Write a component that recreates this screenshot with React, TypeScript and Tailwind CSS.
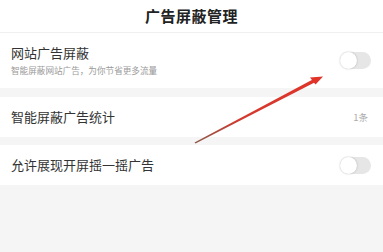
export default function App() {
  const font = { fontFamily: '"Noto Sans CJK SC", "Noto Sans", sans-serif' };

  const Toggle = () => (
    <div className="relative w-[31px] h-[17px] rounded-full bg-[#e6e6e6]">
      <div className="absolute left-0 top-0 w-[17px] h-[17px] rounded-full bg-white shadow-[0_0_2px_rgba(0,0,0,0.25)]" />
    </div>
  );

  return (
    <div className="relative w-[383px] h-[252px] bg-[#f5f5f5] overflow-hidden" style={font}>
      <header className="h-[33px] bg-white border-b border-[#efefef] flex items-center justify-center">
        <h1 className="text-[15px] font-bold text-[#222] tracking-[0.5px]">广告屏蔽管理</h1>
      </header>

      <div className="h-[55px] bg-white flex items-center justify-between pl-[11px] pr-[12px]">
        <div className="flex flex-col">
          <span className="text-[13px] leading-[16px] text-[#333]">网站广告屏蔽</span>
          <span className="text-[8.6px] leading-[12px] mt-[3px] text-[#9a9a9a]">智能屏蔽网站广告，为你节省更多流量</span>
        </div>
        <Toggle />
      </div>

      <div className="mt-[9px] h-[40px] bg-white flex items-center justify-between pl-[11px] pr-[15px]">
        <span className="text-[13px] text-[#333]">智能屏蔽广告统计</span>
        <span className="text-[9.5px] text-[#aaa]">1条</span>
      </div>

      <div className="mt-[8px] h-[40px] bg-white flex items-center justify-between pl-[11px] pr-[12px]">
        <span className="text-[13px] text-[#333]">允许展现开屏摇一摇广告</span>
        <Toggle />
      </div>

      {/* red annotation arrow */}
      <svg className="absolute left-0 top-0 pointer-events-none" width="383" height="252" viewBox="0 0 383 252">
        <defs>
          <linearGradient id="ar" x1="195" y1="143" x2="322" y2="77" gradientUnits="userSpaceOnUse">
            <stop offset="0" stopColor="#8a5a4a" />
            <stop offset="0.35" stopColor="#d23a2e" />
            <stop offset="1" stopColor="#e0342a" />
          </linearGradient>
        </defs>
        <polygon points="194.5,142.6 195.5,143.4 316,81.8 314.6,78.6" fill="url(#ar)" />
        <polygon points="310,77.6 323,76.5 315.5,84.5" fill="#e0342a" />
      </svg>
    </div>
  );
}
